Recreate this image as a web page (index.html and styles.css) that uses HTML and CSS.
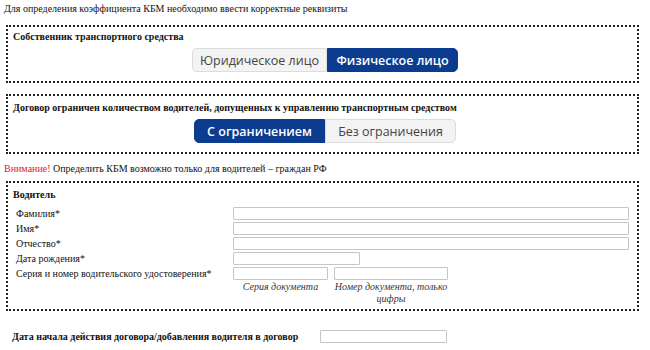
FILE: index.html
```html
<!DOCTYPE html>
<html lang="ru">
<head>
  <meta charset="UTF-8" />
  <meta name="viewport" content="width=device-width, initial-scale=1.0" />
  <title>Проверка КБМ</title>
  <link rel="stylesheet" href="styles.css">
</head>
<body>

<p class="intro">Для определения коэффициента КБМ необходимо ввести корректные реквизиты</p>

<div class="block owner">
  <div class="block-title">Собственник транспортного средства</div>
  <div class="switch">
    <button class="switch-btn">Юридическое лицо</button>
    <button class="switch-btn active">Физическое лицо</button>
  </div>
</div>

<div class="block limit">
  <div class="block-title">Договор ограничен количеством водителей, допущенных к управлению транспортным средством</div>
  <div class="switch">
    <button class="switch-btn active">С ограничением</button>
    <button class="switch-btn">Без ограничения</button>
  </div>
</div>

<p class="notice"><span class="warn">Внимание!</span> Определить КБМ возможно только для водителей – граждан РФ</p>

<div class="block driver">
  <div class="block-title">Водитель</div>
  <div class="driver-form">
    <label>Фамилия*</label>
    <input type="text" class="wide">
    <label>Имя*</label>
    <input type="text" class="wide">
    <label>Отчество*</label>
    <input type="text" class="wide">
    <label>Дата рождения*</label>
    <input type="text" class="date">
    <label class="top">Серия и номер водительского удостоверения*</label>
    <div class="doc-fields">
      <div class="doc-field series">
        <input type="text">
        <span class="hint">Серия документа</span>
      </div>
      <div class="doc-field number">
        <input type="text">
        <span class="hint">Номер документа, только цифры</span>
      </div>
    </div>
  </div>
</div>

<div class="start-row">
  <label>Дата начала действия договора/добавления водителя в договор</label>
  <input type="text" class="date">
</div>

</body>
</html>
```

FILE: styles.css
```css
body {
  margin: 0;
  padding: 3px 11px 0 4px;
  font-family: "Liberation Serif", "DejaVu Serif", serif;
  font-size: 10px;
  color: #111;
  background: #fff;
}

.intro {
  margin: 0 0 10px 0;
  line-height: 12px;
}

.block {
  margin-left: 2px;
  border: 2px dotted #222;
  padding: 3px 5px 9px 5px;
  margin-bottom: 9px;
}

.block.limit {
  margin-top: 11px;
  padding-top: 5px;
}

.block-title {
  font-weight: bold;
  line-height: 13px;
  margin-bottom: 5px;
}

.switch {
  display: flex;
  justify-content: center;
  padding-left: 5px;
}

.switch-btn {
  font-family: "Open Sans", sans-serif;
  font-size: 12.5px;
  height: 24px;
  width: 133px;
  padding: 0;
  border: 1px solid #dcdcdc;
  background: #f3f3f3;
  color: #444;
  cursor: pointer;
}

.owner .switch-btn:first-child {
  width: 135px;
}

.owner .switch-btn:last-child {
  width: 131px;
}

.limit .switch-btn:first-child {
  width: 131px;
}

.limit .switch-btn:last-child {
  width: 131px;
}

.switch-btn:first-child {
  border-radius: 5px 0 0 5px;
}

.switch-btn:last-child {
  border-radius: 0 5px 5px 0;
}

.switch-btn.active {
  background: #0b3c8f;
  border-color: #0b3c8f;
  color: #fff;
  font-weight: 600;
}

.notice {
  margin: 9px 0 6px 0;
  line-height: 12px;
}

.warn {
  color: #e0141e;
}

.driver {
  padding-top: 5px;
  padding-bottom: 4px;
}

.driver .block-title {
  margin-bottom: 6px;
}

.driver-form {
  display: grid;
  grid-template-columns: 217px 1fr;
  row-gap: 2px;
  align-items: center;
  padding-left: 3px;
}

.driver-form label {
  line-height: 13px;
}

.driver-form label.top {
  align-self: start;
}

input[type="text"] {
  box-sizing: border-box;
  height: 13px;
  border: 1px solid #c6c6c6;
  border-radius: 1px;
  padding: 0 2px;
  margin: 0;
  font-size: 10px;
  background: #fff;
}

.driver-form .wide {
  width: 396px;
}

.date {
  width: 127px;
}

.doc-fields {
  display: flex;
  gap: 6px;
}

.doc-field {
  display: flex;
  flex-direction: column;
}

.doc-field input {
  width: 100%;
}

.doc-field.series {
  width: 95px;
}

.doc-field.number {
  width: 114px;
}

.hint {
  font-style: italic;
  color: #333;
  text-align: center;
  line-height: 12px;
  margin-top: 1px;
}

.start-row {
  display: flex;
  align-items: center;
  margin-top: 19px;
  padding-left: 8px;
}

.start-row label {
  font-weight: bold;
  width: 308px;
}
```
